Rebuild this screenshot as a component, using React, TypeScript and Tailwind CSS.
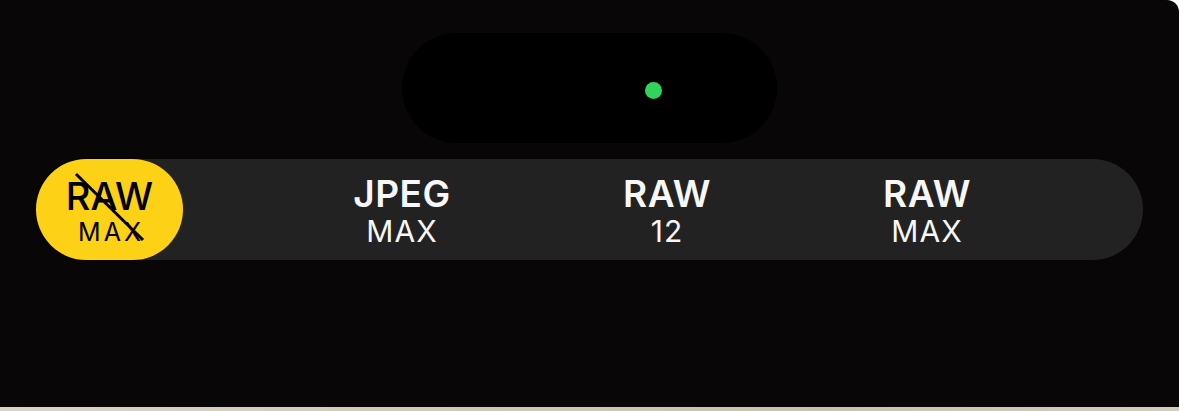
const formats = [
  { top: 'JPEG', bottom: 'MAX', ml: 'ml-[119px]' },
  { top: 'RAW', bottom: '12', ml: 'ml-[65px]' },
  { top: 'RAW', bottom: 'MAX', ml: 'ml-[60px]' },
];

const FormatLabel = ({ top, bottom }: { top: string; bottom: string }) => (
  <div className="flex flex-col items-center">
    <span className="text-[37px] leading-[30px] font-semibold tracking-[0.5px]">{top}</span>
    <span className="mt-[9px] text-[30px] leading-[26px] font-normal tracking-[1px]">{bottom}</span>
  </div>
);

const App = () => {
  return (
    <div className="w-[1179px] h-[411px] bg-white flex flex-col overflow-hidden font-['Inter','Roboto',sans-serif]">
      <div className="flex-1 bg-[#080606] rounded-tr-[12px] flex flex-col">
        {/* dynamic island */}
        <div className="mt-[33px] mx-auto w-[375px] h-[110px] rounded-full bg-black flex items-center pl-[243px] pt-[4px]">
          <div className="w-[17px] h-[17px] rounded-full bg-[#32d35a]" />
        </div>

        {/* format picker */}
        <div className="mt-[16px] ml-[36px] w-[1107px] h-[101px] rounded-full bg-[#232222] flex items-center text-[#f7f7f7]">
          <div className="relative w-[147px] h-[101px] rounded-full bg-[#fdd116] text-black flex flex-col items-center justify-center pt-[3px]">
            <span className="text-[38px] leading-[30px] font-medium">RAW</span>
            <span className="mt-[11px] text-[25px] leading-[20px] tracking-[3px] pl-[3px]">MAX</span>
            <svg className="absolute left-0 top-0" width="147" height="101" viewBox="0 0 147 101">
              <line x1="40" y1="15" x2="107" y2="81" stroke="#000" strokeWidth="3" />
            </svg>
          </div>
          {formats.map(({ top, bottom, ml }) => (
            <div key={top + bottom} className={`${ml} w-[200px] flex justify-center pt-[3px]`}>
              <FormatLabel top={top} bottom={bottom} />
            </div>
          ))}
        </div>
      </div>
      <div className="h-[4px] bg-[linear-gradient(90deg,#d9d4c4,#cfc8b2_40%,#c9c2ab_70%,#d2ccba)]" />
    </div>
  );
};

export default App;
